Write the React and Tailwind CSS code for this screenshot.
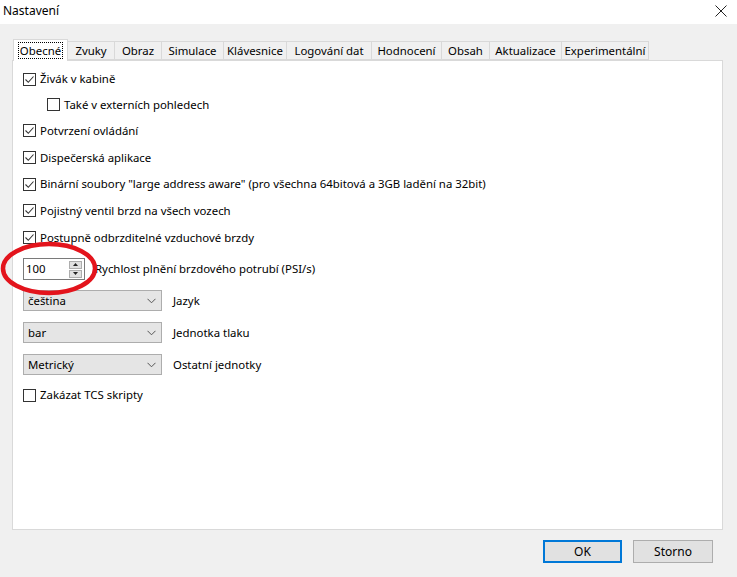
import React from 'react';

const font = { fontFamily: '"Segoe UI", "Noto Sans", "Liberation Sans", sans-serif' };

const tabs = [
  ['Obecné', 'w-[55px]'],
  ['Zvuky', 'w-[47px]'],
  ['Obraz', 'w-[47px]'],
  ['Simulace', 'w-[62px]'],
  ['Klávesnice', 'w-[63px]'],
  ['Logování dat', 'w-[85px]'],
  ['Hodnocení', 'w-[70px]'],
  ['Obsah', 'w-[48px]'],
  ['Aktualizace', 'w-[72px]'],
  ['Experimentální', 'w-[87px]'],
];

function CheckBox({ checked }) {
  return (
    <div className="w-[13px] h-[13px] border border-[#333333] bg-white flex items-center justify-center shrink-0">
      {checked && (
        <svg width="11" height="11" viewBox="0 0 11 11" fill="none">
          <path d="M1.5 5.5l2.8 2.8L9.5 2.5" stroke="#333333" strokeWidth="1.1" />
        </svg>
      )}
    </div>
  );
}

function CheckRow({ label, checked, className }) {
  return (
    <div className={`flex items-center gap-[4px] ${className}`}>
      <CheckBox checked={checked} />
      <span>{label}</span>
    </div>
  );
}

function Select({ value, label, className }) {
  return (
    <div className={`flex items-center ${className}`}>
      <div className="w-[139px] h-[21px] bg-[#e5e5e5] border border-[#adadad] flex items-center justify-between pl-[4px] pr-[5px]">
        <span>{value}</span>
        <svg width="9" height="6" viewBox="0 0 9 6" fill="none">
          <path d="M0.5 0.8l4 4 4-4" stroke="#555" strokeWidth="1" />
        </svg>
      </div>
      <span className="ml-[11px]">{label}</span>
    </div>
  );
}

export default function App() {
  return (
    <div className="w-[737px] h-[577px] bg-[#f0f0f0] text-[11.4px] text-black flex flex-col relative overflow-hidden" style={font}>
      <div className="h-[24px] bg-white flex items-center justify-between pl-[3px] pr-[10px] shrink-0">
        <span className="-mt-[3px] text-[12px]">Nastavení</span>
        <svg width="12" height="12" viewBox="0 0 12 12" className="-mt-[2px]">
          <path d="M0.5 0.5l11 11M11.5 0.5l-11 11" stroke="#222" strokeWidth="1" />
        </svg>
      </div>

      <div className="flex items-end pl-[13px] mt-[15px] h-[21px]">
        {tabs.map(([t, w], i) =>
          i === 0 ? (
            <div key={t} className={`${w} h-[22px] -mb-px bg-white border border-[#d9d9d9] border-b-0 flex items-center justify-center relative z-10`}>
              <span className="border border-dotted border-black px-[1px] leading-[15px]">{t}</span>
            </div>
          ) : (
            <div key={t} className={`${w} h-[19px] bg-[#f0f0f0] border border-[#d9d9d9] border-l-0 flex items-center justify-center`}>
              {t}
            </div>
          )
        )}
      </div>

      <div className="ml-[12px] w-[711px] h-[470px] bg-white border border-[#d9d9d9] pl-[10px] pt-[5px] flex flex-col">
        <CheckRow checked label="Živák v kabině" className="h-[26px]" />
        <CheckRow label="Také v externích pohledech" className="h-[25px] pl-[24px]" />
        <CheckRow checked label="Potvrzení ovládání" className="h-[27px]" />
        <CheckRow checked label="Dispečerská aplikace" className="h-[27px]" />
        <CheckRow checked label={'Binární soubory "large address aware" (pro všechna 64bitová a 3GB ladění na 32bit)'} className="h-[26px]" />
        <CheckRow checked label="Pojistný ventil brzd na všech vozech" className="h-[27px]" />
        <CheckRow checked label="Postupně odbrzditelné vzduchové brzdy" className="h-[27px]" />

        <div className="flex items-center mt-[7px]">
          <div className="w-[62px] h-[22px] bg-white border border-[#7a7a7a] flex items-center justify-between pl-[2px] pr-[2px]">
            <span>100</span>
            <div className="flex flex-col gap-px">
              <div className="w-[13px] h-[8px] bg-[#e1e1e1] border border-[#adadad] flex items-center justify-center">
                <svg width="5" height="3" viewBox="0 0 5 3"><path d="M2.5 0L5 3H0z" fill="#222" /></svg>
              </div>
              <div className="w-[13px] h-[8px] bg-[#e1e1e1] border border-[#adadad] flex items-center justify-center">
                <svg width="5" height="3" viewBox="0 0 5 3"><path d="M0 0h5L2.5 3z" fill="#222" /></svg>
              </div>
            </div>
          </div>
          <span className="ml-[10px]">Rychlost plnění brzdového potrubí (PSI/s)</span>
        </div>

        <Select value="čeština" label="Jazyk" className="mt-[10px]" />
        <Select value="bar" label="Jednotka tlaku" className="mt-[11px]" />
        <Select value="Metrický" label="Ostatní jednotky" className="mt-[11px]" />

        <CheckRow label="Zakázat TCS skripty" className="h-[20px] mt-[10px]" />
      </div>

      <div className="flex justify-end gap-[11px] pr-[24px] mt-[10px]">
        <button className="w-[79px] h-[23px] bg-[#e1e1e1] border-2 border-[#0078d7] flex items-center justify-center text-[12px]">OK</button>
        <button className="w-[80px] h-[23px] bg-[#e1e1e1] border border-[#adadad] flex items-center justify-center text-[12px]">Storno</button>
      </div>

      <svg className="absolute left-0 top-[240px]" width="102" height="58" viewBox="0 0 102 58">
        <ellipse cx="49" cy="28.5" rx="46" ry="24.5" fill="none" stroke="#e3141c" strokeWidth="4.5" />
      </svg>
    </div>
  );
}
